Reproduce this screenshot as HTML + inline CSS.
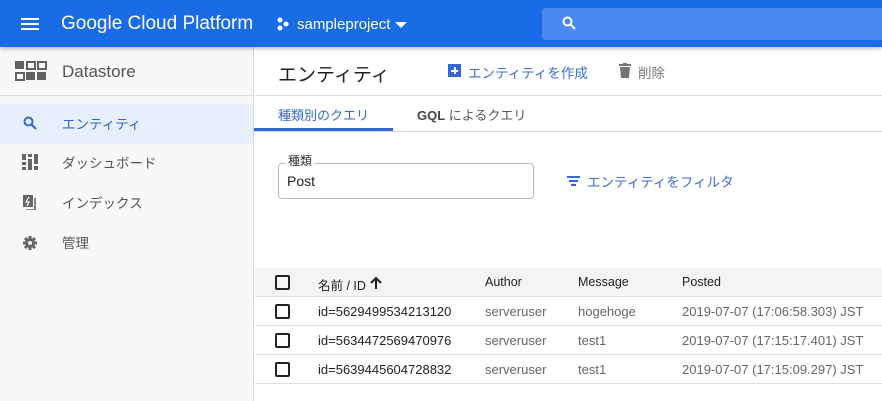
<!DOCTYPE html>
<html><head><meta charset="utf-8"><style>
*{box-sizing:border-box;margin:0;padding:0}
body{width:882px;height:401px;overflow:hidden;background:#fff;font-family:"Liberation Sans","Noto Sans CJK JP",sans-serif;position:relative}
.abs{position:absolute}
.hdr{left:0;top:0;width:882px;height:47px;background:#1a6be6;box-shadow:0 2px 4px rgba(0,0,0,.25);z-index:2}
.side{left:0;top:47px;width:254px;height:354px;background:#f8f8f8;border-right:1px solid #dadada}
.t{white-space:nowrap}
.row{position:absolute;left:255px;width:627px;height:29px;border-bottom:1px solid #e0e0e0;font-size:13px;color:#666}
.row span{position:absolute;top:7px;white-space:nowrap}
.cb{position:absolute;left:20px;top:7px;width:15px;height:15px;border:2px solid #222;border-radius:2px}
</style></head><body>
<div class="abs hdr">
 <div class="abs" style="left:21px;top:18px;width:18px;height:2px;background:#fff;box-shadow:0 5px 0 #fff,0 10px 0 #fff"></div>
 <div class="abs t" style="left:61px;top:13px;color:#fff;font-size:19px">Google Cloud Platform</div>
 <svg class="abs" style="left:276px;top:17px" width="14" height="14"><circle cx="4" cy="3" r="2.5" fill="#fff"/><circle cx="10" cy="7" r="2.5" fill="#fff"/><circle cx="4" cy="11" r="2.5" fill="#fff"/></svg>
 <div class="abs t" style="left:297px;top:16px;color:#fff;font-size:15px">sampleproject</div>
 <div class="abs" style="left:395px;top:22px;border-left:6px solid transparent;border-right:6px solid transparent;border-top:6px solid #fff"></div>
 <div class="abs" style="left:542px;top:8px;width:340px;height:32px;background:#4a8af0;border-radius:3px 0 0 3px"></div>
 <svg class="abs" style="left:562px;top:16px" width="14" height="14"><circle cx="5.5" cy="5.5" r="4" stroke="#fff" stroke-width="2" fill="none"/><path d="M8.5 8.5L13 13" stroke="#fff" stroke-width="2.2"/></svg>
</div>
<div class="abs side">
 <svg class="abs" style="left:15px;top:14px" width="32" height="20"><g fill="#616161"><rect x="0" y="0" width="9" height="8"/><rect x="12" y="1" width="8" height="7" fill="none" stroke="#616161" stroke-width="2"/><rect x="23" y="1" width="8" height="7" fill="none" stroke="#616161" stroke-width="2"/><rect x="1" y="12" width="8" height="7" fill="none" stroke="#616161" stroke-width="2"/><rect x="11" y="11" width="9" height="8"/><rect x="22" y="11" width="9" height="8"/></g></svg>
 <div class="abs t" style="left:62px;top:15px;font-size:17px;color:#555">Datastore</div>
 <div class="abs" style="left:0;top:48px;width:253px;height:1px;background:#dadada"></div>
 <div class="abs" style="left:0;top:57px;width:253px;height:40px;background:#e8effc"></div>
 <svg class="abs" style="left:23px;top:69px" width="14" height="14"><circle cx="5.5" cy="5.5" r="4" stroke="#3367d6" stroke-width="2" fill="none"/><path d="M8.5 8.5L13 13" stroke="#3367d6" stroke-width="2.2"/></svg>
 <div class="abs t" style="left:62px;top:66px;font-size:13.5px;color:#3367d6">エンティティ</div>
 <svg class="abs" style="left:22px;top:107px" width="16" height="16" fill="#666"><rect x="0" y="0" width="4" height="6"/><rect x="0" y="8" width="4" height="3"/><rect x="0" y="13" width="4" height="3"/><rect x="6" y="0" width="4" height="3"/><rect x="6" y="5" width="4" height="11"/><rect x="12" y="0" width="4" height="10"/><rect x="12" y="12" width="4" height="4"/></svg>
 <div class="abs t" style="left:62px;top:105px;font-size:13.5px;color:#555">ダッシュボード</div>
 <svg class="abs" style="left:23px;top:148px" width="14" height="15"><path d="M0 0h10v12H0z" fill="#666"/><path d="M12 3v12H3" stroke="#666" stroke-width="1.6" fill="none"/><path d="M6 2L3 7h3l-2 4" stroke="#fff" stroke-width="1.2" fill="none"/></svg>
 <div class="abs t" style="left:62px;top:145px;font-size:13.5px;color:#555">インデックス</div>
 <svg class="abs" style="left:23px;top:189px" width="14" height="14"><circle cx="7" cy="7" r="5" fill="#666"/><g stroke="#666" stroke-width="3"><path d="M7 0v14M0 7h14M2 2l10 10M12 2L2 12"/></g><circle cx="7" cy="7" r="2" fill="#f8f8f8"/></svg>
 <div class="abs t" style="left:62px;top:185px;font-size:13.5px;color:#555">管理</div>
</div>
<div class="abs t" style="left:278px;top:60px;font-size:19px;color:#222">エンティティ</div>
<div class="abs" style="left:448px;top:64px;width:13px;height:13px;background:#3367d6"></div>
<div class="abs" style="left:451px;top:69.5px;width:7px;height:2px;background:#fff"></div>
<div class="abs" style="left:453.5px;top:67px;width:2px;height:7px;background:#fff"></div>
<div class="abs t" style="left:468px;top:62px;font-size:13.5px;color:#3b6fd8">エンティティを作成</div>
<svg class="abs" style="left:619px;top:63px" width="12" height="15"><rect x="0" y="1" width="12" height="2" fill="#757575"/><rect x="4" y="0" width="4" height="2" fill="#757575"/><path d="M1 4h10l-1 11H2z" fill="#757575"/></svg>
<div class="abs t" style="left:638px;top:62px;font-size:13.5px;color:#777">削除</div>
<div class="abs" style="left:255px;top:95px;width:627px;height:1px;background:#dadada"></div>
<div class="abs t" style="left:278px;top:105px;font-size:13px;color:#3367d6">種類別のクエリ</div>
<div class="abs" style="left:254px;top:128px;width:139px;height:3px;background:#3367d6"></div>
<div class="abs t" style="left:417px;top:105px;font-size:13px;color:#555"><b style="color:#444">GQL</b> によるクエリ</div>
<div class="abs" style="left:255px;top:131px;width:627px;height:1px;background:#dadada"></div>
<div class="abs" style="left:278px;top:163px;width:256px;height:36px;border:1px solid #bbb;border-radius:4px"></div>
<div class="abs t" style="left:285px;top:152px;font-size:12px;color:#333;background:#fff;padding:0 3px">種類</div>
<div class="abs t" style="left:287px;top:173px;font-size:14px;color:#222">Post</div>
<div class="abs" style="left:567px;top:176px;width:13px;height:2px;background:#3367d6"></div>
<div class="abs" style="left:569px;top:180px;width:9px;height:2px;background:#3367d6"></div>
<div class="abs" style="left:571px;top:184px;width:5px;height:2px;background:#3367d6"></div>
<div class="abs t" style="left:587px;top:171px;font-size:13.5px;color:#3b6fd8">エンティティをフィルタ</div>
<div class="row" style="top:268px;background:#f4f4f4;height:29px;color:#222;font-size:12.5px"><div class="cb"></div><span style="left:63px">名前 / ID</span><svg class="abs" style="left:115px;top:8px" width="12" height="13"><path d="M6 13V2M1 7l5-5 5 5" stroke="#222" stroke-width="2" fill="none"/></svg><span style="left:230px">Author</span><span style="left:323px">Message</span><span style="left:427px">Posted</span></div>
<div class="row" style="top:297px"><div class="cb"></div><span style="left:63px;color:#222">id=5629499534213120</span><span style="left:230px">serveruser</span><span style="left:323px">hogehoge</span><span style="left:427px">2019-07-07 (17:06:58.303) JST</span></div>
<div class="row" style="top:326px"><div class="cb"></div><span style="left:63px;color:#222">id=5634472569470976</span><span style="left:230px">serveruser</span><span style="left:323px">test1</span><span style="left:427px">2019-07-07 (17:15:17.401) JST</span></div>
<div class="row" style="top:355px"><div class="cb"></div><span style="left:63px;color:#222">id=5639445604728832</span><span style="left:230px">serveruser</span><span style="left:323px">test1</span><span style="left:427px">2019-07-07 (17:15:09.297) JST</span></div>
</body></html>
